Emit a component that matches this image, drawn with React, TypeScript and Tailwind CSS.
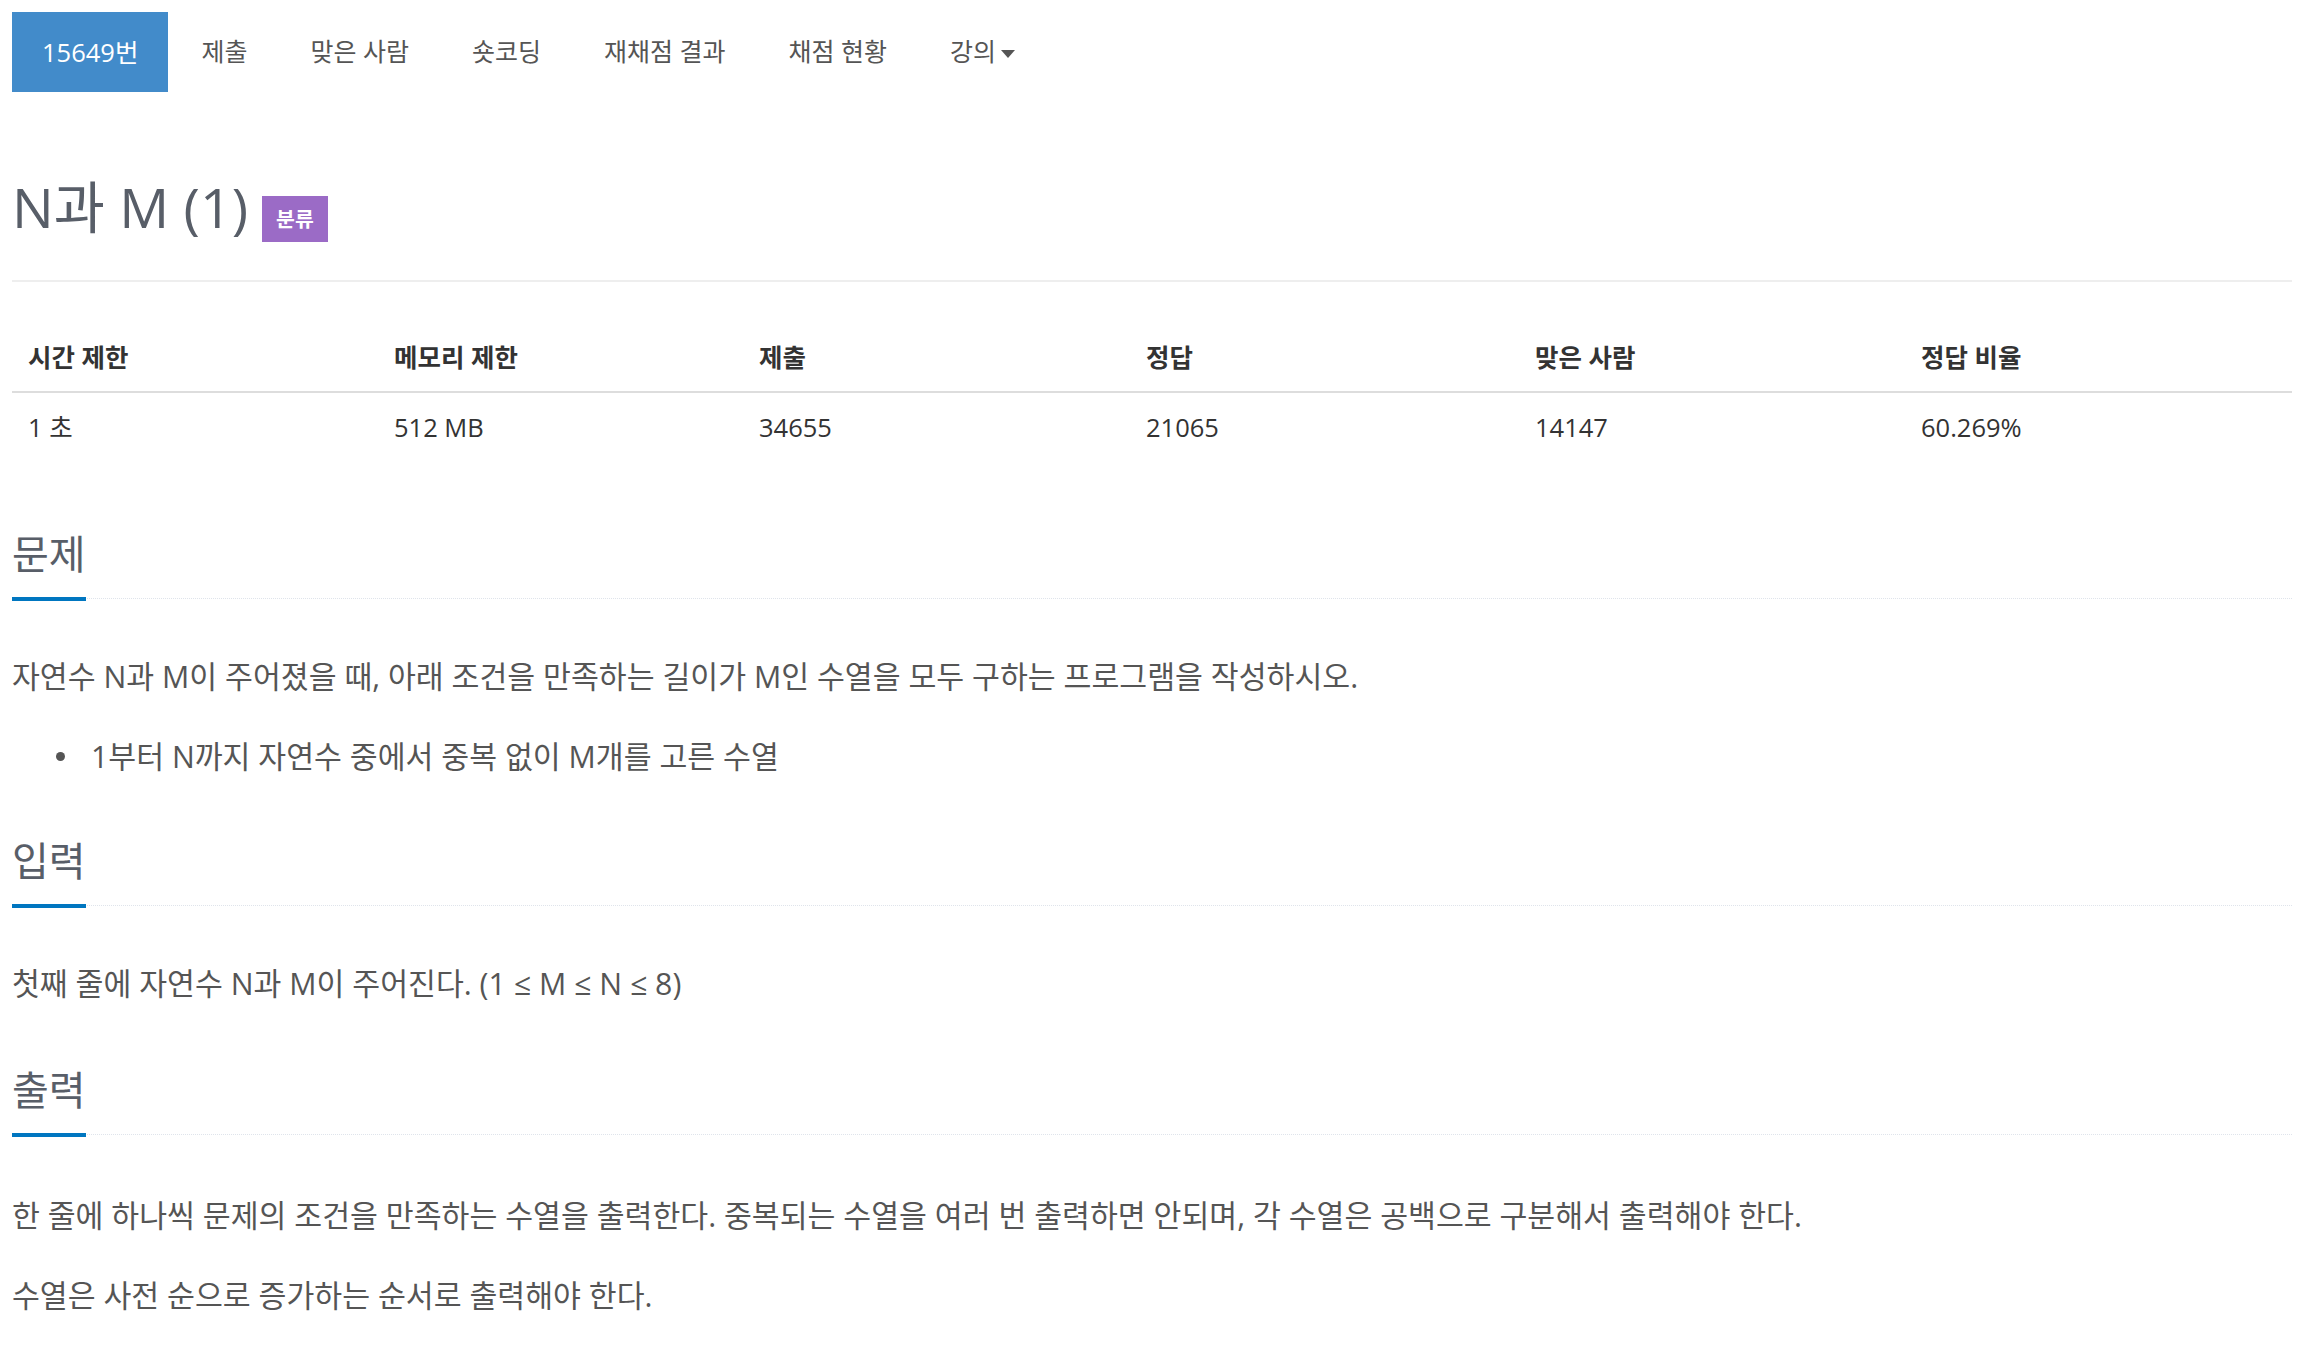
const font = { fontFamily: '"Open Sans", "Noto Sans CJK KR", sans-serif' };

const menu = ['제출', '맞은 사람', '숏코딩', '재채점 결과', '채점 현황'];

const stats = [
  ['시간 제한', '1 초'],
  ['메모리 제한', '512 MB'],
  ['제출', '34655'],
  ['정답', '21065'],
  ['맞은 사람', '14147'],
  ['정답 비율', '60.269%'],
];

function Headline({ title }: { title: string }) {
  return (
    <div className="border-b border-dotted border-[#dfe4eb]">
      <h2 className="-mb-[3px] inline-block border-b-4 border-[#0076c0] pb-[21px] text-[40px] leading-[44px] text-[#585e68]">
        {title}
      </h2>
    </div>
  );
}

export default function App() {
  return (
    <div className="flex min-h-screen flex-col bg-white pl-[12px] pr-[22px] pt-[12px] text-[#555]" style={font}>
      {/* problem menu */}
      <ul className="flex h-[80px] text-[25px]">
        <li className="flex h-full items-center bg-[#428bca] px-[30px] text-[25.5px] text-white">15649번</li>
        {menu.map((m) => (
          <li key={m} className="ml-[3px] flex h-full items-center px-[30px]">
            {m}
          </li>
        ))}
        <li className="ml-[3px] flex h-full items-center px-[30px]">
          강의
          <span className="ml-[5px] mt-[3px] inline-block h-0 w-0 border-x-[7.5px] border-t-[8px] border-x-transparent border-t-[#555]" />
        </li>
      </ul>

      {/* title */}
      <div className="mt-[85px] flex items-start border-b-2 border-[#eee] pb-[38px]">
        <h1 className="text-[55.5px] leading-[60px] text-[#585e68]">N과 M (1)</h1>
        <span className="ml-[14px] mt-[19px] flex h-[46px] items-center bg-[#9b6bc6] px-[14px] text-[20.5px] font-bold text-white">
          분류
        </span>
      </div>

      {/* info table */}
      <div className="mt-[41px] grid grid-cols-[366px_365px_387px_389px_386px_387px] text-[25.5px] leading-[36px] text-[#333]">
        {stats.map(([h]) => (
          <div key={h} className="border-b-2 border-[#ddd] px-[16px] py-[16px] font-bold">
            {h}
          </div>
        ))}
        {stats.map(([h, v]) => (
          <div key={h} className="px-[16px] py-[16px]">
            {v}
          </div>
        ))}
      </div>

      {/* description */}
      <section className="mt-[71px] flex flex-col">
        <Headline title="문제" />
        <div className="mt-[55px] flex flex-col text-[30.3px] leading-[45px]">
          <p className="mb-[35px]">
            자연수 N과 M이 주어졌을 때, 아래 조건을 만족하는 길이가 M인 수열을 모두 구하는 프로그램을 작성하시오.
          </p>
          <ul className="mb-[35px] flex flex-col">
            <li className="flex items-center">
              <span className="ml-[44px] mr-[26px] h-[9px] w-[9px] rounded-full bg-[#555]" />
              1부터 N까지 자연수 중에서 중복 없이 M개를 고른 수열
            </li>
          </ul>
        </div>
      </section>

      <section className="mt-[25px] flex flex-col">
        <Headline title="입력" />
        <div className="mt-[55px] flex flex-col text-[30.3px] leading-[45px]">
          <p className="mb-[35px]">첫째 줄에 자연수 N과 M이 주어진다. (1 ≤ M ≤ N ≤ 8)</p>
        </div>
      </section>

      <section className="mt-[27px] flex flex-col">
        <Headline title="출력" />
        <div className="mt-[58px] flex flex-col text-[30.3px] leading-[45px]">
          <p className="mb-[35px]">
            한 줄에 하나씩 문제의 조건을 만족하는 수열을 출력한다. 중복되는 수열을 여러 번 출력하면 안되며, 각 수열은 공백으로 구분해서 출력해야 한다.
          </p>
          <p className="mb-[35px]">수열은 사전 순으로 증가하는 순서로 출력해야 한다.</p>
        </div>
      </section>
    </div>
  );
}
